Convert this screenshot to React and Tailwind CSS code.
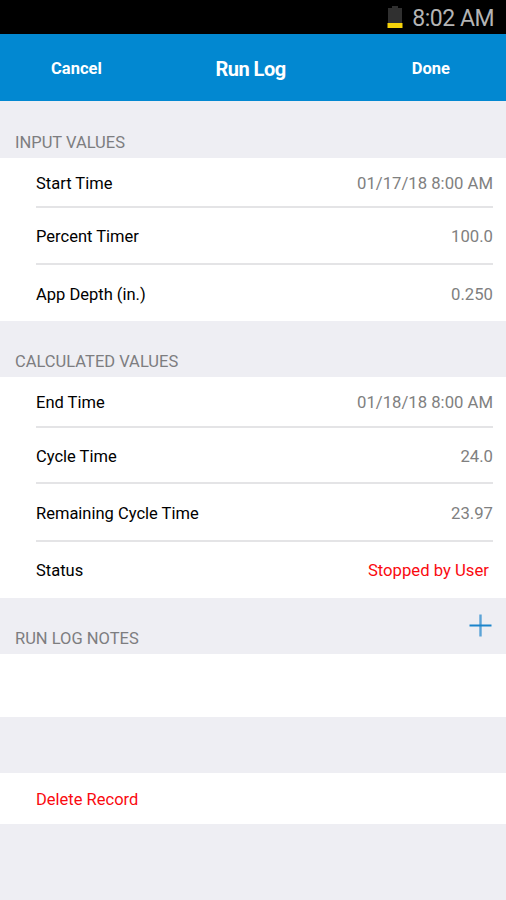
function Row({ label, value, height, last, danger }) {
  return (
    <div className={`ml-9 mr-[13px] flex items-center justify-between ${height} ${last ? "" : "border-b-2 border-[#e4e4e6]"}`}>
      <span className="text-black">{label}</span>
      <span className={danger ? "mr-1 text-[16.7px] text-[#fa0a10]" : "text-[16.7px] text-[#808080]"}>{value}</span>
    </div>
  );
}

function SectionTitle({ children, height, action }) {
  return (
    <div className={`flex items-end justify-between bg-[#eeeef3] pl-[15px] pr-[14px] ${height}`}>
      <h2 className="pb-[5px] leading-5 text-[#7d7d80]">{children}</h2>
      {action}
    </div>
  );
}

export default function App() {
  return (
    <div className="flex h-[900px] w-[506px] flex-col bg-[#eeeef3] font-['Roboto',sans-serif] text-[16.5px] leading-5">
      <div className="flex h-[34px] shrink-0 items-center justify-end gap-[9px] bg-black pr-3">
        <svg className="h-[24px] w-4" viewBox="0 0 16 24">
          <path d="M5 1h6v2h4v15H1V3h4z" fill="#303030" />
          <path d="M.5 18h15v5H.5z" fill="#f5d20a" />
        </svg>
        <span className="pt-[3px] text-[23px] leading-7 tracking-[-0.5px] text-[#b4b4b4]">8:02 AM</span>
      </div>

      <header className="grid h-[67px] shrink-0 grid-cols-3 items-center bg-[#0288d1] font-bold text-white">
        <button className="pl-[51px] pt-[3px] text-left">Cancel</button>
        <h1 className="-ml-[5px] pt-[2px] text-center text-[20px] tracking-[-0.5px]">Run Log</h1>
        <button className="pr-[56px] pt-[3px] text-right">Done</button>
      </header>

      <SectionTitle height="h-[57px]">INPUT VALUES</SectionTitle>
      <section className="bg-white">
        <Row label="Start Time" value="01/17/18 8:00 AM" height="h-[50px] pt-[4px]" />
        <Row label="Percent Timer" value="100.0" height="h-[57px] pt-[3px]" />
        <Row label="App Depth (in.)" value="0.250" height="h-[56px] pt-[3px]" last />
      </section>

      <SectionTitle height="h-[56px]">CALCULATED VALUES</SectionTitle>
      <section className="bg-white">
        <Row label="End Time" value="01/18/18 8:00 AM" height="h-[51px] pt-[3px]" />
        <Row label="Cycle Time" value="24.0" height="h-[56px] pt-[4px]" />
        <Row label="Remaining Cycle Time" value="23.97" height="h-[58px] pt-[4px]" />
        <Row label="Status" value="Stopped by User" height="h-[56px] pt-[2px]" last danger />
      </section>

      <SectionTitle
        height="h-[56px]"
        action={
          <button aria-label="Add note" className="mb-[17px]">
            <svg className="h-[23px] w-[23px]" viewBox="0 0 23 23" fill="none" strokeWidth="2">
              <path d="M11.5 .5v22" stroke="#5ba3d6" strokeWidth="2.4" />
              <path d="M.5 11.5h22" stroke="#1b84cb" />
            </svg>
          </button>
        }
      >
        RUN LOG NOTES
      </SectionTitle>
      <section className="h-[63px] shrink-0 bg-white" />

      <button className="mt-[56px] flex h-[51px] shrink-0 items-center bg-white pl-9 pt-[2px] text-[#fa0a10]">
        Delete Record
      </button>
    </div>
  );
}
